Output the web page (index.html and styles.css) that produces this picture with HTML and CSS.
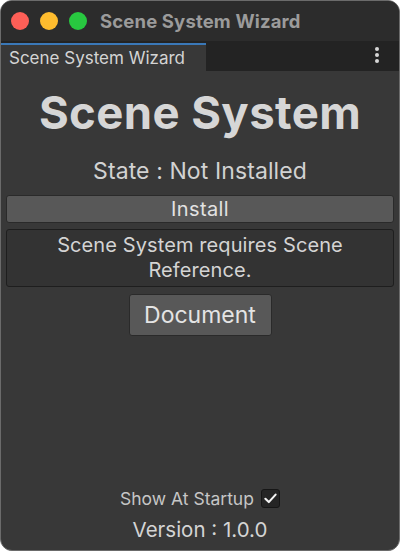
FILE: index.html
```html
<!DOCTYPE html>
<html>
<head>
<meta charset="utf-8">
<link rel="stylesheet" href="styles.css">
</head>
<body>
<div class="window">
  <div class="titlebar">
    <div class="lights">
      <span class="light red"></span>
      <span class="light yellow"></span>
      <span class="light green"></span>
    </div>
    <div class="title">Scene System Wizard</div>
  </div>
  <div class="tabstrip">
    <div class="tab">Scene System Wizard</div>
    <div class="menu"><span></span><span></span><span></span></div>
  </div>
  <div class="content">
    <h1 class="heading">Scene System</h1>
    <div class="state">State : Not Installed</div>
    <div class="install">Install</div>
    <div class="help">Scene System requires Scene<br>Reference.</div>
    <div class="doc">Document</div>
    <div class="spacer"></div>
    <div class="startup">
      <span>Show At Startup</span>
      <span class="check">
        <svg width="13" height="11" viewBox="0 0 13 11"><path d="M1.4 5.8 L4.8 9.1 L11.6 1.6" fill="none" stroke="#f4f4f4" stroke-width="2.1" stroke-linecap="round" stroke-linejoin="round"/></svg>
      </span>
    </div>
    <div class="version">Version : 1.0.0</div>
  </div>
</div>
</body>
</html>
```
FILE: styles.css
```css
html, body {
  margin: 0;
  padding: 0;
  background: #ffffff;
}
body {
  width: 400px;
  height: 551px;
  font-family: Inter, "Noto Sans", sans-serif;
}
.window {
  box-sizing: border-box;
  width: 400px;
  height: 551px;
  border: 1px solid #6b6b6b;
  border-radius: 12px;
  overflow: hidden;
  background: #383838;
  display: flex;
  flex-direction: column;
}
.titlebar {
  height: 40px;
  flex: none;
  background: #2c2c2c;
  display: flex;
  align-items: center;
  box-sizing: border-box;
  padding-left: 10px;
  padding-bottom: 1px;
}
.lights {
  display: flex;
  gap: 11px;
}
.light {
  width: 18px;
  height: 18px;
  border-radius: 50%;
  display: block;
}
.red { background: #fe5f57; }
.yellow { background: #febc2e; }
.green { background: #28c840; }
.title {
  margin-left: 13px;
  color: #9b9b9b;
  font-weight: 700;
  font-size: 18.5px;
  letter-spacing: 0.15px;
}
.tabstrip {
  height: 30px;
  flex: none;
  background: #232323;
  display: flex;
  align-items: stretch;
  justify-content: space-between;
}
.tab {
  width: 205px;
  box-sizing: border-box;
  background: #383838;
  border-top: 2px solid #3a78b8;
  margin-top: 2px;
  color: #d4d4d4;
  font-size: 17px;
  line-height: 26px;
  padding-left: 8px;
}
.menu {
  display: flex;
  flex-direction: column;
  justify-content: center;
  gap: 2px;
  padding-right: 20px;
  padding-bottom: 2px;
}
.menu span {
  width: 4px;
  height: 4px;
  border-radius: 50%;
  background: #d6d6d6;
  display: block;
}
.content {
  flex: 1;
  display: flex;
  flex-direction: column;
  align-items: center;
  padding: 0 5px 7px;
}
.heading {
  margin: 15px 0 0;
  font-size: 45.5px;
  font-weight: 700;
  color: #d6d6d6;
  line-height: 54px;
  letter-spacing: 0.4px;
}
.state {
  margin-top: 17px;
  font-size: 23px;
  color: #d2d2d2;
  line-height: 28px;
  letter-spacing: 0.1px;
}
.install {
  margin-top: 10px;
  align-self: stretch;
  height: 28px;
  box-sizing: border-box;
  background: #585858;
  border: 1px solid #2a2a2a;
  border-radius: 3px;
  color: #e2e2e2;
  font-size: 20px;
  text-align: center;
  line-height: 26px;
  letter-spacing: 0.4px;
}
.help {
  margin-top: 6px;
  align-self: stretch;
  box-sizing: border-box;
  height: 58px;
  background: #333333;
  border: 1px solid #1e1e1e;
  border-radius: 3px;
  color: #d4d4d4;
  font-size: 20px;
  text-align: center;
  line-height: 25px;
  padding-top: 3px;
  letter-spacing: 0.1px;
}
.doc {
  margin-top: 7px;
  width: 143px;
  height: 42px;
  box-sizing: border-box;
  background: #585858;
  border: 1px solid #2a2a2a;
  border-radius: 3px;
  color: #e4e4e4;
  font-size: 23px;
  text-align: center;
  line-height: 40px;
}
.spacer { flex: 1; }
.startup {
  display: flex;
  align-items: center;
  gap: 7px;
  color: #c6c6c6;
  font-size: 17.5px;
  height: 20px;
}
.check {
  width: 19px;
  height: 19px;
  box-sizing: border-box;
  background: #252525;
  border: 1px solid #161616;
  border-radius: 3px;
  display: flex;
  align-items: center;
  justify-content: center;
}
.version {
  margin-top: 9px;
  font-size: 20.5px;
  color: #d4d4d4;
  line-height: 26px;
}
```
